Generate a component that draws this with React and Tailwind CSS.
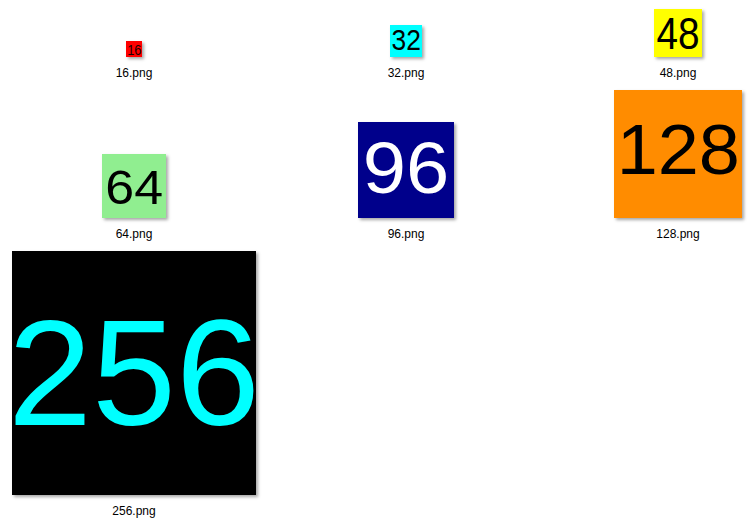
import React from "react";

const icons = [
  { name: "16", box: "w-[16px] h-[16px]", bg: "bg-[#ff0000]", text: "text-[#1a0000] text-[15px]", fix: "scale-x-[0.86]" },
  { name: "32", box: "w-[32px] h-[32px]", bg: "bg-[#00ffff]", text: "text-black text-[29px]", fix: "scale-x-[0.91] -translate-y-[1px]" },
  { name: "48", box: "w-[48px] h-[48px]", bg: "bg-[#ffff00]", text: "text-black text-[45px]", fix: "scale-x-[0.86]" },
  { name: "64", box: "w-[64px] h-[64px]", bg: "bg-[#90ee90]", text: "text-black text-[49px]", fix: "scale-x-[1.06] translate-y-[1px]" },
  { name: "96", box: "w-[96px] h-[96px]", bg: "bg-[#00008b]", text: "text-white text-[72px]", fix: "scale-x-[1.08] -translate-y-[2px]" },
  { name: "128", box: "w-[128px] h-[128px]", bg: "bg-[#ff8c00]", text: "text-black text-[71px]", fix: "scale-x-[1.04] -translate-y-[5px]" },
  { name: "256", box: "w-[244px] h-[244px]", bg: "bg-black", text: "text-[#00ffff] text-[151px]", fix: "-translate-y-[1px]" },
];

function Icon({ item }) {
  return (
    <div className="flex flex-col items-center justify-end">
      <div className={`${item.box} ${item.bg} flex items-center justify-center overflow-hidden shadow-[2px_2px_3px_rgba(0,0,0,0.35)]`}>
        <span className={`${item.text} ${item.fix} inline-block leading-none whitespace-nowrap font-['Liberation_Sans',Arial,sans-serif]`}>
          {item.name}
        </span>
      </div>
      <div className="mt-2 h-4 text-[12px] leading-4 text-black font-['Liberation_Sans',Arial,sans-serif]">
        {item.name}.png
      </div>
    </div>
  );
}

export default function App() {
  return (
    <div className="w-full h-[522px] bg-white overflow-hidden">
      <div className="grid grid-cols-[264px_264px_264px] gap-x-2 gap-y-[9px] pl-[2px] pt-[9px]">
        {icons.map((item) => (
          <Icon key={item.name} item={item} />
        ))}
      </div>
    </div>
  );
}
